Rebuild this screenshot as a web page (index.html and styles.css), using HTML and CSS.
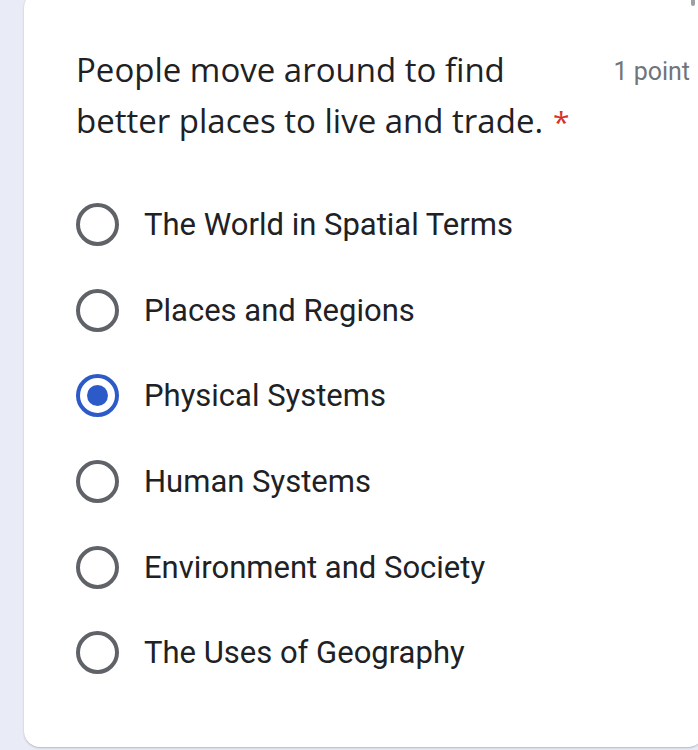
FILE: index.html
```html
<!DOCTYPE html>
<html>
<head>
<meta charset="utf-8">
<link rel="stylesheet" href="styles.css">
</head>
<body>
<div class="page">
  <div class="card">
    <div class="header">
      <div class="question">People move around to find better places to live and trade.<span class="req">*</span></div>
      <div class="points">1 point</div>
    </div>
    <div class="options">
      <div class="opt"><span class="radio"></span><span class="label">The World in Spatial Terms</span></div>
      <div class="opt"><span class="radio"></span><span class="label">Places and Regions</span></div>
      <div class="opt"><span class="radio on"></span><span class="label">Physical Systems</span></div>
      <div class="opt"><span class="radio"></span><span class="label">Human Systems</span></div>
      <div class="opt"><span class="radio"></span><span class="label">Environment and Society</span></div>
      <div class="opt"><span class="radio"></span><span class="label">The Uses of Geography</span></div>
    </div>
  </div>
  <div class="mark"></div>
</div>
</body>
</html>
```
FILE: styles.css
```css
html, body { margin: 0; padding: 0; }
body {
  background: #e9ecf6;
  width: 698px;
  height: 750px;
  overflow: hidden;
  position: relative;
}
.page { padding-left: 24px; }
.card {
  margin-top: -8px;
  width: 680px;
  height: 755px;
  box-sizing: border-box;
  background: #fff;
  border-radius: 16px;
  box-shadow: 0 1px 2px rgba(60,64,67,0.3);
  padding: 52px 0 0 52px;
}
.header {
  display: flex;
  justify-content: space-between;
  align-items: flex-start;
}
.question {
  width: 500px;
  font-family: "Open Sans", sans-serif;
  font-size: 33px;
  line-height: 51px;
  color: #202124;
}
.req { color: #d93025; margin-left: 10px; font-size: 30px; }
.points {
  font-family: Roboto, sans-serif;
  font-size: 25px;
  color: #70757a;
  margin-top: 13px;
  margin-right: 14px;
  white-space: nowrap;
}
.options {
  margin-top: 56px;
  display: flex;
  flex-direction: column;
  gap: 42px;
}
.opt {
  display: flex;
  align-items: center;
  height: 43.6px;
}
.radio {
  width: 43px;
  height: 43px;
  box-sizing: border-box;
  border: 4px solid #5f6368;
  border-radius: 50%;
  display: flex;
  align-items: center;
  justify-content: center;
  flex: none;
}
.radio.on { border-color: #2c5bc9; }
.radio.on::after {
  content: "";
  width: 21px;
  height: 21px;
  border-radius: 50%;
  background: #2c5bc9;
}
.label {
  margin-left: 25px;
  font-family: Roboto, sans-serif;
  font-size: 31px;
  color: #202124;
}
.mark {
  position: absolute;
  left: 691px;
  top: 0;
  width: 4px;
  height: 6px;
  border-radius: 0 0 2px 2px;
  background: #9aa0a6;
}
```
